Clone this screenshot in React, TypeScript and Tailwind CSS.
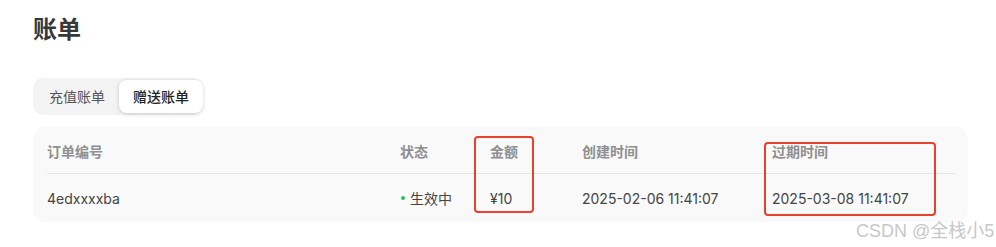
import React from 'react';

const font = { fontFamily: 'Inter, "Noto Sans CJK SC", sans-serif' };

const columns = ['订单编号', '状态', '金额', '创建时间', '过期时间'];

export default function App() {
  return (
    <div className="relative w-[996px] h-[247px] bg-white overflow-hidden" style={font}>
      <div className="pl-[33px] pr-[28px] pt-[14px]">
        <h1 className="text-[24px] leading-[32px] font-bold text-[#383838]">账单</h1>

        <div className="mt-[32px] inline-flex items-center rounded-[10px] bg-[#f3f3f3] p-[2px] pr-0 h-[37px]">
          <button className="w-[84px] h-[33px] text-[14px] text-[#555] rounded-[8px]">充值账单</button>
          <button className="w-[84px] h-[33px] text-[14px] text-[#222] font-medium rounded-[8px] bg-white shadow-[0_1px_4px_rgba(0,0,0,0.18)]">
            赠送账单
          </button>
        </div>

        <div className="mt-[12px] rounded-[12px] bg-[#f9f9f9] pl-[14px] pr-[13px]">
          <div className="grid grid-cols-[353px_90px_92px_190px_1fr] h-[47px] items-center pt-[2px] border-b border-[#e4e4e4] text-[14px] font-semibold text-[#8f8f8f]">
            {columns.map((c) => (
              <div key={c}>{c}</div>
            ))}
          </div>
          <div className="grid grid-cols-[353px_90px_92px_190px_1fr] h-[48px] items-center text-[14px] text-[#444]">
            <div>4edxxxxba</div>
            <div className="flex items-center gap-[5px]">
              <span className="ml-[1px] w-[4px] h-[4px] rounded-full bg-[#22c55e]" />
              <span>生效中</span>
            </div>
            <div>¥10</div>
            <div>2025-02-06 11:41:07</div>
            <div>2025-03-08 11:41:07</div>
          </div>
        </div>
      </div>

      {/* annotation boxes */}
      <div className="absolute left-[474px] top-[136px] w-[60px] h-[77px] border-2 border-[#e8412c] rounded-[4px]" />
      <div className="absolute left-[764px] top-[142px] w-[172px] h-[74px] border-2 border-[#e8412c] rounded-[4px]" />

      {/* watermark */}
      <div className="absolute left-[856px] top-[219px] text-[18px] leading-[24px] text-[#c8c8c8] whitespace-nowrap" style={{ fontFamily: '"Liberation Sans", "Noto Sans CJK SC", sans-serif' }}>
        CSDN @全栈小5
      </div>
    </div>
  );
}
